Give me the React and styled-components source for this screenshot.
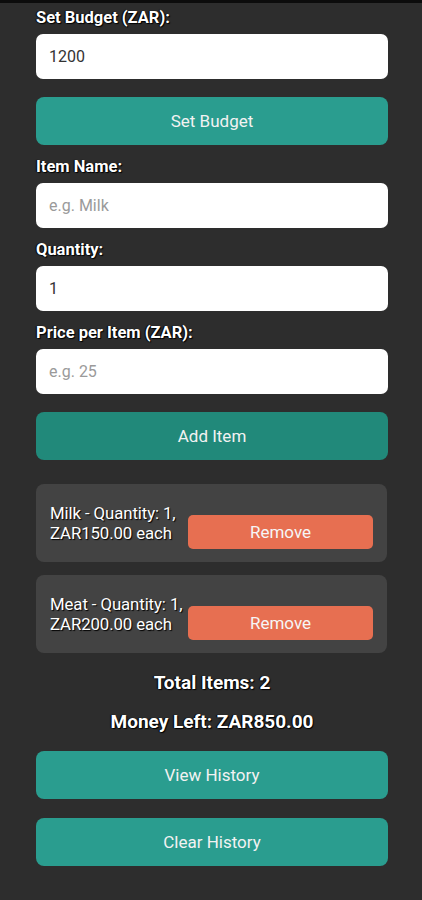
import React from "react";
import styled, { createGlobalStyle } from "styled-components";

const Global = createGlobalStyle`
  html, body { margin: 0; padding: 0; background: #2d2d2d; }
  body { font-family: Roboto, "Noto Sans", "Liberation Sans", sans-serif; }
  * { box-sizing: border-box; }
`;

const Page = styled.div`
  min-height: 900px;
  background: #2d2d2d;
  border-top: 3px solid #0c0c0c;
  padding: 5px 34px 0 36px;
`;

const Label = styled.label`
  display: block;
  color: #fff;
  font-weight: 700;
  font-size: 16.5px;
  line-height: 20px;
  text-shadow: 1px 1px 1px #000, -1px 0 1px #000;
  margin-top: ${(p) => p.$mt || 0}px;
`;

const Input = styled.input`
  display: block;
  width: 100%;
  height: 45px;
  margin-top: 6px;
  border: none;
  border-radius: 7px;
  background: #fff;
  padding: 0 13px;
  font-family: Roboto, "Liberation Sans", sans-serif;
  font-size: 16px;
  color: #333;
  outline: none;
  &::placeholder { color: #9a9a9a; }
`;

const Button = styled.button`
  display: block;
  width: 100%;
  height: 48px;
  margin-top: ${(p) => p.$mt || 0}px;
  border: none;
  border-radius: 8px;
  background: ${(p) => (p.$dark ? "#21897a" : "#2a9d8f")};
  color: #f2f2f2;
  font-family: Roboto, "Liberation Sans", sans-serif;
  font-size: 17px;
  cursor: pointer;
`;

const Card = styled.div`
  display: flex;
  align-items: center;
  width: 351px;
  height: 78px;
  margin-top: ${(p) => p.$mt}px;
  padding: 0 14px;
  background: #434343;
  border-radius: 8px;
`;

const ItemText = styled.div`
  flex: 0 0 138px;
  color: #fff;
  font-size: 16.8px;
  line-height: 20px;
  letter-spacing: -0.1px;
  text-shadow: 1px 1px 1px #000;
`;

const RemoveButton = styled.button`
  flex: 1;
  height: 34px;
  margin-top: 18px;
  border: none;
  border-radius: 5px;
  background: #e76f51;
  color: #f6f6f6;
  font-family: Roboto, "Liberation Sans", sans-serif;
  font-size: 17px;
`;

const Summary = styled.div`
  text-align: center;
  color: #fff;
  font-weight: 700;
  font-size: 19px;
  line-height: 22px;
  margin-top: ${(p) => p.$mt}px;
  text-shadow: 1px 1px 1px #000, -1px 0 1px #000;
`;

const items = [
  { name: "Milk", qty: 1, price: "150.00" },
  { name: "Meat", qty: 1, price: "200.00" },
];

export default function App() {
  return (
    <>
      <Global />
      <Page>
        <Label>Set Budget (ZAR):</Label>
        <Input defaultValue="1200" />
        <Button $mt={18}>Set Budget</Button>

        <Label $mt={12}>Item Name:</Label>
        <Input placeholder="e.g. Milk" />
        <Label $mt={12}>Quantity:</Label>
        <Input defaultValue="1" />
        <Label $mt={12}>Price per Item (ZAR):</Label>
        <Input placeholder="e.g. 25" />
        <Button $mt={18} $dark>Add Item</Button>

        {items.map((it, i) => (
          <Card key={it.name} $mt={i === 0 ? 24 : 13}>
            <ItemText>
              {it.name} - Quantity: {it.qty}, ZAR{it.price} each
            </ItemText>
            <RemoveButton>Remove</RemoveButton>
          </Card>
        ))}

        <Summary $mt={19}>Total Items: 2</Summary>
        <Summary $mt={17}>Money Left: ZAR850.00</Summary>

        <Button $mt={18}>View History</Button>
        <Button $mt={19}>Clear History</Button>
      </Page>
    </>
  );
}
